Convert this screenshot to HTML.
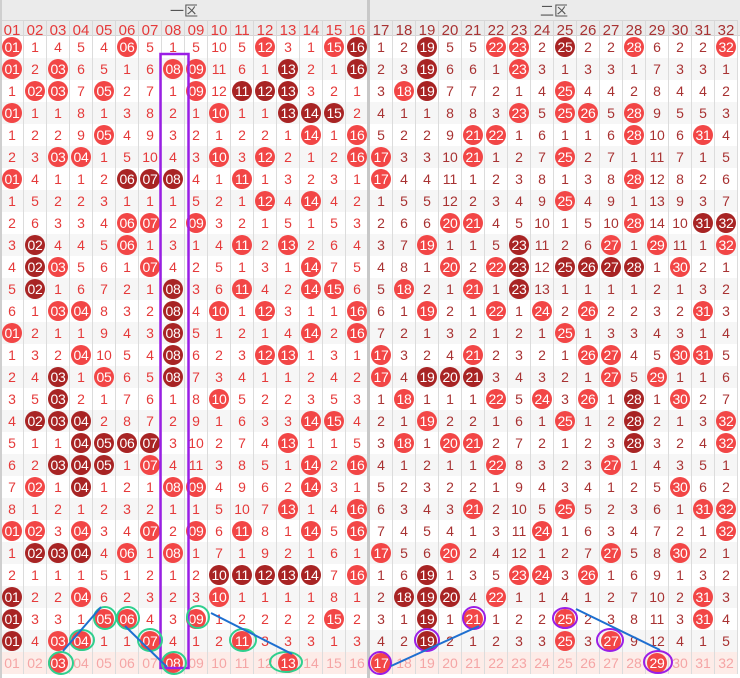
<!DOCTYPE html>
<html><head><meta charset="utf-8"><style>
*{margin:0;padding:0;box-sizing:border-box}
body{width:740px;height:678px;overflow:hidden;background:#fff;font-family:"Liberation Sans","Noto Sans CJK SC",sans-serif;position:relative}
.hd{position:absolute;left:0;top:0;width:740px;height:36px;background:#ebebeb;border-bottom:1px solid #d6d6d6}
.zt{position:absolute;top:0;height:21px;line-height:22px;font-size:14px;color:#555;text-align:center;width:368px;border-bottom:1px solid #d6d6d6}
.sec{position:absolute;top:21px;width:368px}
.r{display:flex;height:22px}
.r i{width:23px;height:22px;text-align:center;font-style:normal;line-height:22px;font-size:14px;border-right:1px solid #dcdcdc;flex:none;white-space:nowrap}
.r:nth-child(odd){background:#f6f6f6}
.h{height:15px!important;background:transparent!important}
.h i{height:15px;line-height:20px;color:#666;font-size:15px;border-right:1px solid #d8d8d8}
.L .r i{color:#e53a3a}
.R .r i{color:#a83232}
.r b{display:inline-block;width:20px;height:20px;border-radius:50%;background:#f24646;color:#fff;font-weight:normal;font-size:14px;line-height:20px;margin-top:1px;vertical-align:top;letter-spacing:-0.3px}
.r b.d{background:#a82424}
.r.f{background:#fdece8!important}
.r.f i{color:#f5a5a5!important}
.sep{position:absolute;left:367px;top:0;width:3px;height:678px;background:#c8c8c8}
.lb{position:absolute;left:0;top:0;width:2px;height:678px;background:#cfcfcf}
</style></head><body>
<div class="hd"></div>
<div class="zt" style="left:0">一区</div>
<div class="zt" style="left:370px">二区</div>
<div class="sec L" style="left:1px">
<div class="r h"><i>01</i><i>02</i><i>03</i><i>04</i><i>05</i><i>06</i><i>07</i><i>08</i><i>09</i><i>10</i><i>11</i><i>12</i><i>13</i><i>14</i><i>15</i><i>16</i></div>
<div class="r"><i><b>01</b></i><i>1</i><i>4</i><i>5</i><i>4</i><i><b>06</b></i><i>5</i><i>1</i><i>5</i><i>10</i><i>5</i><i><b>12</b></i><i>3</i><i>1</i><i><b>15</b></i><i><b class=d>16</b></i></div>
<div class="r"><i><b>01</b></i><i>2</i><i><b>03</b></i><i>6</i><i>5</i><i>1</i><i>6</i><i><b>08</b></i><i><b>09</b></i><i>11</i><i>6</i><i>1</i><i><b class=d>13</b></i><i>2</i><i>1</i><i><b class=d>16</b></i></div>
<div class="r"><i>1</i><i><b>02</b></i><i><b>03</b></i><i>7</i><i><b>05</b></i><i>2</i><i>7</i><i>1</i><i><b>09</b></i><i>12</i><i><b class=d>11</b></i><i><b class=d>12</b></i><i><b class=d>13</b></i><i>3</i><i>2</i><i>1</i></div>
<div class="r"><i><b>01</b></i><i>1</i><i>1</i><i>8</i><i>1</i><i>3</i><i>8</i><i>2</i><i>1</i><i><b>10</b></i><i>1</i><i>1</i><i><b class=d>13</b></i><i><b class=d>14</b></i><i><b class=d>15</b></i><i>2</i></div>
<div class="r"><i>1</i><i>2</i><i>2</i><i>9</i><i><b>05</b></i><i>4</i><i>9</i><i>3</i><i>2</i><i>1</i><i>2</i><i>2</i><i>1</i><i><b>14</b></i><i>1</i><i><b>16</b></i></div>
<div class="r"><i>2</i><i>3</i><i><b>03</b></i><i><b>04</b></i><i>1</i><i>5</i><i>10</i><i>4</i><i>3</i><i><b>10</b></i><i>3</i><i><b>12</b></i><i>2</i><i>1</i><i>2</i><i><b>16</b></i></div>
<div class="r"><i><b>01</b></i><i>4</i><i>1</i><i>1</i><i>2</i><i><b class=d>06</b></i><i><b class=d>07</b></i><i><b class=d>08</b></i><i>4</i><i>1</i><i><b>11</b></i><i>1</i><i>3</i><i>2</i><i>3</i><i>1</i></div>
<div class="r"><i>1</i><i>5</i><i>2</i><i>2</i><i>3</i><i>1</i><i>1</i><i>1</i><i>5</i><i>2</i><i>1</i><i><b>12</b></i><i>4</i><i><b>14</b></i><i>4</i><i>2</i></div>
<div class="r"><i>2</i><i>6</i><i>3</i><i>3</i><i>4</i><i><b>06</b></i><i><b>07</b></i><i>2</i><i><b>09</b></i><i>3</i><i>2</i><i>1</i><i>5</i><i>1</i><i>5</i><i>3</i></div>
<div class="r"><i>3</i><i><b class=d>02</b></i><i>4</i><i>4</i><i>5</i><i><b>06</b></i><i>1</i><i>3</i><i>1</i><i>4</i><i><b>11</b></i><i>2</i><i><b>13</b></i><i>2</i><i>6</i><i>4</i></div>
<div class="r"><i>4</i><i><b class=d>02</b></i><i><b>03</b></i><i>5</i><i>6</i><i>1</i><i><b>07</b></i><i>4</i><i>2</i><i>5</i><i>1</i><i>3</i><i>1</i><i><b>14</b></i><i>7</i><i>5</i></div>
<div class="r"><i>5</i><i><b class=d>02</b></i><i>1</i><i>6</i><i>7</i><i>2</i><i>1</i><i><b class=d>08</b></i><i>3</i><i>6</i><i><b>11</b></i><i>4</i><i>2</i><i><b>14</b></i><i><b>15</b></i><i>6</i></div>
<div class="r"><i>6</i><i>1</i><i><b>03</b></i><i><b>04</b></i><i>8</i><i>3</i><i>2</i><i><b class=d>08</b></i><i>4</i><i><b>10</b></i><i>1</i><i><b>12</b></i><i>3</i><i>1</i><i>1</i><i><b>16</b></i></div>
<div class="r"><i><b>01</b></i><i>2</i><i>1</i><i>1</i><i>9</i><i>4</i><i>3</i><i><b class=d>08</b></i><i>5</i><i>1</i><i>2</i><i>1</i><i>4</i><i><b>14</b></i><i>2</i><i><b>16</b></i></div>
<div class="r"><i>1</i><i>3</i><i>2</i><i><b>04</b></i><i>10</i><i>5</i><i>4</i><i><b class=d>08</b></i><i>6</i><i>2</i><i>3</i><i><b>12</b></i><i><b>13</b></i><i>1</i><i>3</i><i>1</i></div>
<div class="r"><i>2</i><i>4</i><i><b class=d>03</b></i><i>1</i><i><b>05</b></i><i>6</i><i>5</i><i><b class=d>08</b></i><i>7</i><i>3</i><i>4</i><i>1</i><i>1</i><i>2</i><i>4</i><i>2</i></div>
<div class="r"><i>3</i><i>5</i><i><b class=d>03</b></i><i>2</i><i>1</i><i>7</i><i>6</i><i>1</i><i>8</i><i><b>10</b></i><i>5</i><i>2</i><i>2</i><i>3</i><i>5</i><i>3</i></div>
<div class="r"><i>4</i><i><b class=d>02</b></i><i><b class=d>03</b></i><i><b class=d>04</b></i><i>2</i><i>8</i><i>7</i><i>2</i><i>9</i><i>1</i><i>6</i><i>3</i><i>3</i><i><b>14</b></i><i><b>15</b></i><i>4</i></div>
<div class="r"><i>5</i><i>1</i><i>1</i><i><b class=d>04</b></i><i><b class=d>05</b></i><i><b class=d>06</b></i><i><b class=d>07</b></i><i>3</i><i>10</i><i>2</i><i>7</i><i>4</i><i><b>13</b></i><i>1</i><i>1</i><i>5</i></div>
<div class="r"><i>6</i><i>2</i><i><b class=d>03</b></i><i><b class=d>04</b></i><i><b class=d>05</b></i><i>1</i><i><b>07</b></i><i>4</i><i>11</i><i>3</i><i>8</i><i>5</i><i>1</i><i><b>14</b></i><i>2</i><i><b>16</b></i></div>
<div class="r"><i>7</i><i><b>02</b></i><i>1</i><i><b class=d>04</b></i><i>1</i><i>2</i><i>1</i><i><b>08</b></i><i><b>09</b></i><i>4</i><i>9</i><i>6</i><i>2</i><i><b>14</b></i><i>3</i><i>1</i></div>
<div class="r"><i>8</i><i>1</i><i>2</i><i>1</i><i>2</i><i>3</i><i>2</i><i>1</i><i>1</i><i>5</i><i>10</i><i>7</i><i><b>13</b></i><i>1</i><i>4</i><i><b>16</b></i></div>
<div class="r"><i><b>01</b></i><i><b>02</b></i><i>3</i><i><b>04</b></i><i>3</i><i>4</i><i><b>07</b></i><i>2</i><i><b>09</b></i><i>6</i><i><b>11</b></i><i>8</i><i>1</i><i><b>14</b></i><i>5</i><i><b>16</b></i></div>
<div class="r"><i>1</i><i><b class=d>02</b></i><i><b class=d>03</b></i><i><b class=d>04</b></i><i>4</i><i><b>06</b></i><i>1</i><i><b>08</b></i><i>1</i><i>7</i><i>1</i><i>9</i><i>2</i><i>1</i><i>6</i><i>1</i></div>
<div class="r"><i>2</i><i>1</i><i>1</i><i>1</i><i>5</i><i>1</i><i>2</i><i>1</i><i>2</i><i><b class=d>10</b></i><i><b class=d>11</b></i><i><b class=d>12</b></i><i><b class=d>13</b></i><i><b class=d>14</b></i><i>7</i><i><b>16</b></i></div>
<div class="r"><i><b class=d>01</b></i><i>2</i><i>2</i><i><b>04</b></i><i>6</i><i>2</i><i>3</i><i>2</i><i>3</i><i><b>10</b></i><i>1</i><i>1</i><i>1</i><i>1</i><i>8</i><i>1</i></div>
<div class="r"><i><b class=d>01</b></i><i>3</i><i>3</i><i>1</i><i><b>05</b></i><i><b>06</b></i><i>4</i><i>3</i><i><b>09</b></i><i>1</i><i>2</i><i>2</i><i>2</i><i>2</i><i><b>15</b></i><i>2</i></div>
<div class="r"><i><b class=d>01</b></i><i>4</i><i><b>03</b></i><i><b>04</b></i><i>1</i><i>1</i><i><b>07</b></i><i>4</i><i>1</i><i>2</i><i><b>11</b></i><i>3</i><i>3</i><i>3</i><i>1</i><i>3</i></div>
<div class="r f"><i>01</i><i>02</i><i><b>03</b></i><i>04</i><i>05</i><i>06</i><i>07</i><i><b>08</b></i><i>09</i><i>10</i><i>11</i><i>12</i><i><b>13</b></i><i>14</i><i>15</i><i>16</i></div>
</div>
<div class="sec R" style="left:370px">
<div class="r h"><i>17</i><i>18</i><i>19</i><i>20</i><i>21</i><i>22</i><i>23</i><i>24</i><i>25</i><i>26</i><i>27</i><i>28</i><i>29</i><i>30</i><i>31</i><i>32</i></div>
<div class="r"><i>1</i><i>2</i><i><b class=d>19</b></i><i>5</i><i>5</i><i><b>22</b></i><i><b>23</b></i><i>2</i><i><b class=d>25</b></i><i>2</i><i>2</i><i><b>28</b></i><i>6</i><i>2</i><i>2</i><i><b>32</b></i></div>
<div class="r"><i>2</i><i>3</i><i><b class=d>19</b></i><i>6</i><i>6</i><i>1</i><i><b>23</b></i><i>3</i><i>1</i><i>3</i><i>3</i><i>1</i><i>7</i><i>3</i><i>3</i><i>1</i></div>
<div class="r"><i>3</i><i><b>18</b></i><i><b class=d>19</b></i><i>7</i><i>7</i><i>2</i><i>1</i><i>4</i><i><b>25</b></i><i>4</i><i>4</i><i>2</i><i>8</i><i>4</i><i>4</i><i>2</i></div>
<div class="r"><i>4</i><i>1</i><i>1</i><i>8</i><i>8</i><i>3</i><i><b>23</b></i><i>5</i><i><b>25</b></i><i><b>26</b></i><i>5</i><i><b>28</b></i><i>9</i><i>5</i><i>5</i><i>3</i></div>
<div class="r"><i>5</i><i>2</i><i>2</i><i>9</i><i><b>21</b></i><i><b>22</b></i><i>1</i><i>6</i><i>1</i><i>1</i><i>6</i><i><b>28</b></i><i>10</i><i>6</i><i><b>31</b></i><i>4</i></div>
<div class="r"><i><b>17</b></i><i>3</i><i>3</i><i>10</i><i><b>21</b></i><i>1</i><i>2</i><i>7</i><i><b>25</b></i><i>2</i><i>7</i><i>1</i><i>11</i><i>7</i><i>1</i><i>5</i></div>
<div class="r"><i><b>17</b></i><i>4</i><i>4</i><i>11</i><i>1</i><i>2</i><i>3</i><i>8</i><i>1</i><i>3</i><i>8</i><i><b>28</b></i><i>12</i><i>8</i><i>2</i><i>6</i></div>
<div class="r"><i>1</i><i>5</i><i>5</i><i>12</i><i>2</i><i>3</i><i>4</i><i>9</i><i><b>25</b></i><i>4</i><i>9</i><i>1</i><i>13</i><i>9</i><i>3</i><i>7</i></div>
<div class="r"><i>2</i><i>6</i><i>6</i><i><b>20</b></i><i><b>21</b></i><i>4</i><i>5</i><i>10</i><i>1</i><i>5</i><i>10</i><i><b>28</b></i><i>14</i><i>10</i><i><b class=d>31</b></i><i><b class=d>32</b></i></div>
<div class="r"><i>3</i><i>7</i><i><b>19</b></i><i>1</i><i>1</i><i>5</i><i><b class=d>23</b></i><i>11</i><i>2</i><i>6</i><i><b>27</b></i><i>1</i><i><b>29</b></i><i>11</i><i>1</i><i><b>32</b></i></div>
<div class="r"><i>4</i><i>8</i><i>1</i><i><b>20</b></i><i>2</i><i><b>22</b></i><i><b class=d>23</b></i><i>12</i><i><b class=d>25</b></i><i><b class=d>26</b></i><i><b class=d>27</b></i><i><b class=d>28</b></i><i>1</i><i><b>30</b></i><i>2</i><i>1</i></div>
<div class="r"><i>5</i><i><b>18</b></i><i>2</i><i>1</i><i><b>21</b></i><i>1</i><i><b class=d>23</b></i><i>13</i><i>1</i><i>1</i><i>1</i><i>1</i><i>2</i><i>1</i><i>3</i><i>2</i></div>
<div class="r"><i>6</i><i>1</i><i><b>19</b></i><i>2</i><i>1</i><i><b>22</b></i><i>1</i><i><b>24</b></i><i>2</i><i><b>26</b></i><i>2</i><i>2</i><i>3</i><i>2</i><i><b>31</b></i><i>3</i></div>
<div class="r"><i>7</i><i>2</i><i>1</i><i>3</i><i>2</i><i>1</i><i>2</i><i>1</i><i><b>25</b></i><i>1</i><i>3</i><i>3</i><i>4</i><i>3</i><i>1</i><i>4</i></div>
<div class="r"><i><b>17</b></i><i>3</i><i>2</i><i>4</i><i><b>21</b></i><i>2</i><i>3</i><i>2</i><i>1</i><i><b>26</b></i><i><b>27</b></i><i>4</i><i>5</i><i><b>30</b></i><i><b>31</b></i><i>5</i></div>
<div class="r"><i><b>17</b></i><i>4</i><i><b class=d>19</b></i><i><b class=d>20</b></i><i><b class=d>21</b></i><i>3</i><i>4</i><i>3</i><i>2</i><i>1</i><i><b>27</b></i><i>5</i><i><b>29</b></i><i>1</i><i>1</i><i>6</i></div>
<div class="r"><i>1</i><i><b>18</b></i><i>1</i><i>1</i><i>1</i><i><b>22</b></i><i>5</i><i><b>24</b></i><i>3</i><i><b>26</b></i><i>1</i><i><b class=d>28</b></i><i>1</i><i><b>30</b></i><i>2</i><i>7</i></div>
<div class="r"><i>2</i><i>1</i><i><b>19</b></i><i>2</i><i>2</i><i>1</i><i>6</i><i>1</i><i><b>25</b></i><i>1</i><i>2</i><i><b class=d>28</b></i><i>2</i><i>1</i><i>3</i><i><b>32</b></i></div>
<div class="r"><i>3</i><i><b>18</b></i><i>1</i><i><b>20</b></i><i><b>21</b></i><i>2</i><i>7</i><i>2</i><i>1</i><i>2</i><i>3</i><i><b class=d>28</b></i><i>3</i><i>2</i><i>4</i><i><b>32</b></i></div>
<div class="r"><i>4</i><i>1</i><i>2</i><i>1</i><i>1</i><i><b>22</b></i><i>8</i><i>3</i><i>2</i><i>3</i><i><b>27</b></i><i>1</i><i>4</i><i>3</i><i>5</i><i>1</i></div>
<div class="r"><i>5</i><i>2</i><i>3</i><i>2</i><i>2</i><i>1</i><i>9</i><i>4</i><i>3</i><i>4</i><i>1</i><i>2</i><i>5</i><i><b>30</b></i><i>6</i><i>2</i></div>
<div class="r"><i>6</i><i>3</i><i>4</i><i>3</i><i><b>21</b></i><i>2</i><i>10</i><i>5</i><i><b>25</b></i><i>5</i><i>2</i><i>3</i><i>6</i><i>1</i><i><b>31</b></i><i><b>32</b></i></div>
<div class="r"><i>7</i><i>4</i><i>5</i><i>4</i><i>1</i><i>3</i><i>11</i><i><b>24</b></i><i>1</i><i>6</i><i>3</i><i>4</i><i>7</i><i>2</i><i>1</i><i><b>32</b></i></div>
<div class="r"><i><b>17</b></i><i>5</i><i>6</i><i><b>20</b></i><i>2</i><i>4</i><i>12</i><i>1</i><i>2</i><i>7</i><i><b>27</b></i><i>5</i><i>8</i><i><b>30</b></i><i>2</i><i>1</i></div>
<div class="r"><i>1</i><i>6</i><i><b class=d>19</b></i><i>1</i><i>3</i><i>5</i><i><b>23</b></i><i><b>24</b></i><i>3</i><i><b>26</b></i><i>1</i><i>6</i><i>9</i><i>1</i><i>3</i><i>2</i></div>
<div class="r"><i>2</i><i><b class=d>18</b></i><i><b class=d>19</b></i><i><b class=d>20</b></i><i>4</i><i><b>22</b></i><i>1</i><i>1</i><i>4</i><i>1</i><i>2</i><i>7</i><i>10</i><i>2</i><i><b>31</b></i><i>3</i></div>
<div class="r"><i>3</i><i>1</i><i><b class=d>19</b></i><i>1</i><i><b>21</b></i><i>1</i><i>2</i><i>2</i><i><b>25</b></i><i>2</i><i>3</i><i>8</i><i>11</i><i>3</i><i><b>31</b></i><i>4</i></div>
<div class="r"><i>4</i><i>2</i><i><b class=d>19</b></i><i>2</i><i>1</i><i>2</i><i>3</i><i>3</i><i><b>25</b></i><i>3</i><i><b>27</b></i><i>9</i><i>12</i><i>4</i><i>1</i><i>5</i></div>
<div class="r f"><i><b>17</b></i><i>18</i><i>19</i><i>20</i><i>21</i><i>22</i><i>23</i><i>24</i><i>25</i><i>26</i><i>27</i><i>28</i><i><b>29</b></i><i>30</i><i>31</i><i>32</i></div>
</div>
<div class="sep"></div>
<div class="lb"></div>
<svg width="740" height="678" style="position:absolute;left:0;top:0" fill="none">
<rect x="160.5" y="54" width="28" height="614" stroke="#9a1ee6" stroke-width="2.5"/>
<g stroke="#2fcf8e" stroke-width="2">
<ellipse cx="61" cy="663" rx="12" ry="11"/><ellipse cx="82" cy="640" rx="12" ry="10"/><ellipse cx="105" cy="618" rx="11" ry="11"/><ellipse cx="128" cy="618" rx="11" ry="11"/><ellipse cx="150" cy="640" rx="12" ry="11"/><ellipse cx="174" cy="663" rx="12" ry="11"/><ellipse cx="198" cy="617" rx="11" ry="11"/><ellipse cx="243" cy="640" rx="13" ry="11"/><ellipse cx="286" cy="662" rx="16" ry="10"/>
</g>
<g stroke="#9a1ee6" stroke-width="2">
<ellipse cx="380" cy="663" rx="11" ry="11"/><ellipse cx="427" cy="640" rx="12" ry="11"/><ellipse cx="474" cy="618" rx="11" ry="11"/><ellipse cx="565" cy="618" rx="12" ry="10"/><ellipse cx="610" cy="640" rx="13" ry="11"/><ellipse cx="658" cy="662" rx="14" ry="11"/>
</g>
<g stroke="#1e6fd0" stroke-width="2">
<line x1="63" y1="651" x2="101" y2="607"/><line x1="125" y1="626" x2="167" y2="667"/><line x1="211" y1="613" x2="292" y2="654"/>
<line x1="391" y1="666" x2="479" y2="626"/><line x1="576" y1="609" x2="660" y2="650"/>
</g>
</svg>
</body></html>
